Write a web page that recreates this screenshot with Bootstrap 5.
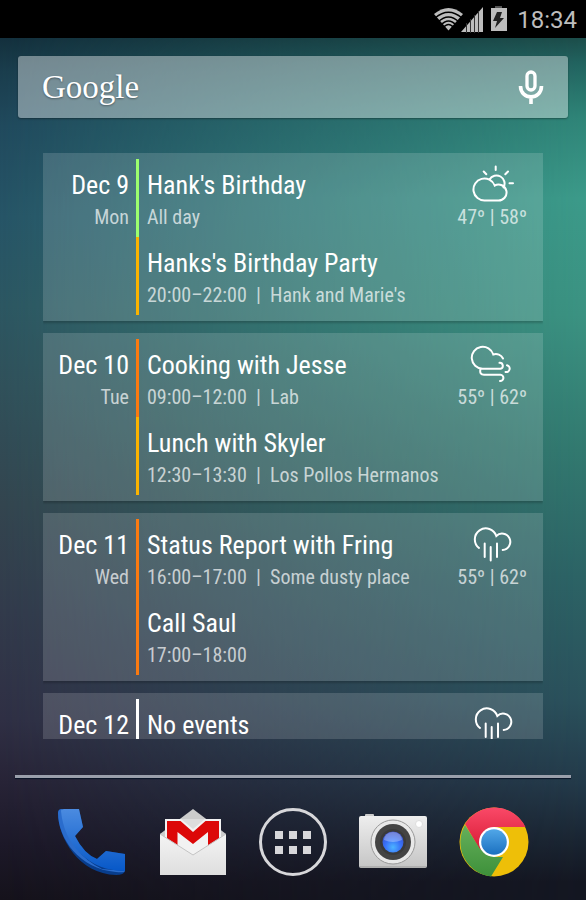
<!DOCTYPE html>
<html lang="en">
<head>
<meta charset="utf-8">
<meta name="viewport" content="width=device-width, initial-scale=1">
<title>Home screen</title>
<link href="https://cdn.jsdelivr.net/npm/bootstrap@5.3.0/dist/css/bootstrap.min.css" rel="stylesheet">
<style>
body { font-family: "Roboto Condensed", "Liberation Sans Narrow", Roboto, sans-serif; color: #fff; background: #15161f; }
.home { position: relative; z-index: 0; overflow: hidden; }
.wall, .wall::after { position: absolute; inset: 0; z-index: -1; }
.wall { background: linear-gradient(#1c4c49 4%, #226460 7%, #2f8578 13%, #3c9b8a 22%, #3b9382 35%, #327a70 50%, #2c6466 64%, #2a515c 78%, #233a4a 87%, #141722 98%); }
.wall::after { content: ""; background: linear-gradient(#132f3c 4%, #1a3d4d 8%, #20495d 14%, #265466 24%, #2c5661 34%, #30505a 43%, #33454f 56%, #323a4b 68%, #2f2f44 80%, #272336 87%, #1c1828 94%, #15121b 100%); -webkit-mask-image: linear-gradient(to right, #000, rgba(0,0,0,.48) 50%, transparent); mask-image: linear-gradient(to right, #000, rgba(0,0,0,.48) 50%, transparent); }
.status { height: 38px; background: #000; color: #bdbdbd; font: 24px/36px Roboto, sans-serif; padding: 2px 9px 0 0; gap: 10px; }
.search { margin: 18px 18px 0; height: 62px; padding: 0 20px 0 24px; border-radius: 3px; background: rgba(255,255,255,.4); box-shadow: 0 1px 2px rgba(0,0,0,.35); }
.logo { font: 33px/62px "Liberation Serif", serif; color: #fff; text-shadow: 0 1px 2px rgba(0,0,0,.4); }
.agenda { margin: 35px 43px 36px; min-height: 0; gap: 12px; }
.day { display: grid; flex: none; grid-template-columns: 86px 1fr auto; padding: 6px 16px 6px 0; background: rgba(255,255,255,.15); box-shadow: 0 2px 2px rgba(0,0,0,.2); }
.title { font-size: 26px; line-height: 28px; white-space: nowrap; }
.detail { font-size: 20px; line-height: 28px; margin-top: 4px; color: rgba(255,255,255,.7); white-space: nowrap; }
.date { padding-top: 12px; text-align: right; }
.slot { height: 78px; padding: 12px 0 0 8px; margin-left: 7px; border-left: 3px solid; }
.green { border-color: #9cff6e; } .amber { border-color: #fbb300; } .orange { border-color: #fb7a10; } .white { border-color: #fff; }
.weather { min-width: 69px; text-align: center; }
.weather .detail { margin-top: 0; }
.weather svg { display: block; width: 48px; height: 38px; margin: 6px auto 0; fill: none; stroke: #fff; stroke-width: 2; stroke-linecap: round; }
.rule { height: 3px; margin: 0 15px; background: #9a9fab; box-shadow: 0 1px 1px #081326; }
.dock { padding: 27px 42px 21px; }
.dock svg { width: 74px; height: 74px; display: block; }
</style>
<script src="https://cdn.jsdelivr.net/npm/bootstrap@5.3.0/dist/js/bootstrap.bundle.min.js"></script>
</head>
<body>
<svg class="d-none" aria-hidden="true">
  <symbol id="rain" viewBox="0 0 48 38"><path d="M11 23A11 11 0 1 1 28.300 11 8.200 8.200 0 1 1 34.700 25M16.700 18.500V32M22.700 22V35.500M29 18.500V32"/></symbol>
</svg>
<div class="home vh-100 d-flex flex-column">
  <div class="wall"></div>
  <header class="status d-flex justify-content-end align-items-center">
    <svg width="75" height="30" viewBox="0 0 75 30" fill="#bdbdbd" aria-label="Wi-Fi, signal, battery charging">
      <path d="M2 9Q16.500-3 31 9L16.500 25.500Z"/>
      <g fill="none" stroke="#000" stroke-width="1.300"><path d="M3 13Q16.500 1.500 30 13M6 17Q16.500 7 27 17M9 20Q16.500 12 24 20M11 23Q16.500 16 22 23"/></g>
      <path d="M29 27L51 2V27Z"/><path d="M34.500 18V28M38.500 14V28M42.500 10V28M46.500 6V28" stroke="#333" stroke-width="1"/>
      <path d="M63 1H70V4H63Z" fill="#555"/><path d="M59 3H75V26H59Z"/><path d="M65 7H70L68 13H72L63 23L65 16H61Z" fill="#222"/>
    </svg>
    <time>18:34</time>
  </header>
  <div class="search d-flex align-items-center justify-content-between">
    <span class="logo">Google</span>
    <button type="button" class="btn p-0 border-0" aria-label="Voice search">
      <svg class="d-block" width="34" height="40" viewBox="0 0 34 40" fill="none" stroke="#fff"><rect x="13" y="5" width="8" height="18" rx="4" stroke-width="3.300"/><path d="M6.500 19C6.500 33.500 27.500 33.500 27.500 19M17 29V37" stroke-width="3.600"/></svg>
    </button>
  </div>

  <main class="agenda d-flex flex-column flex-fill overflow-hidden">
    <section class="day">
      <div class="date"><div class="title">Dec 9</div><div class="detail">Mon</div></div>
      <div>
        <div class="slot green"><div class="title">Hank's Birthday</div><div class="detail">All day</div></div>
        <div class="slot amber"><div class="title">Hanks's Birthday Party</div><div class="detail">20:00–22:00 &nbsp;|&nbsp; Hank and Marie's</div></div>
      </div>
      <div class="weather">
        <svg viewBox="0 0 48 38"><path d="M17 35.500A11 11 0 1 1 26.700 20.500 8 8 0 1 1 30 35.500ZM21.500 14.500A8 8 0 1 1 35.500 22.500M27.700 1.500V5M15.700 6.500L18.300 9.300M40 6.500L37.300 9.300M41.500 18.300H45"/></svg>
        <div class="detail">47º | 58º</div>
      </div>
    </section>
    <section class="day">
      <div class="date"><div class="title">Dec 10</div><div class="detail">Tue</div></div>
      <div>
        <div class="slot orange"><div class="title">Cooking with Jesse</div><div class="detail">09:00–12:00 &nbsp;|&nbsp; Lab</div></div>
        <div class="slot amber"><div class="title">Lunch with Skyler</div><div class="detail">12:30–13:30 &nbsp;|&nbsp; Los Pollos Hermanos</div></div>
      </div>
      <div class="weather">
        <svg viewBox="0 0 48 38"><path d="M35 13.500A8 8 0 0 0 25.300 9.500A11 11 0 1 0 14.500 23.700H32.500A3 3 0 0 0 31.500 17.800M12.500 24C11.500 28 13 29.700 16 29.700H32.500A3 3 0 0 1 32 36M39 20.300A3.400 3.400 0 1 1 37.500 27"/></svg>
        <div class="detail">55º | 62º</div>
      </div>
    </section>
    <section class="day">
      <div class="date"><div class="title">Dec 11</div><div class="detail">Wed</div></div>
      <div>
        <div class="slot orange"><div class="title">Status Report with Fring</div><div class="detail">16:00–17:00 &nbsp;|&nbsp; Some dusty place</div></div>
        <div class="slot orange"><div class="title">Call Saul</div><div class="detail">17:00–18:00</div></div>
      </div>
      <div class="weather">
        <svg viewBox="0 0 48 38"><use href="#rain"/></svg>
        <div class="detail">55º | 62º</div>
      </div>
    </section>
    <section class="day">
      <div class="date"><div class="title">Dec 12</div></div>
      <div><div class="slot white"><div class="title">No events</div></div></div>
      <div class="weather"><svg viewBox="0 0 48 38"><use href="#rain"/></svg></div>
    </section>
  </main>

  <div class="rule"></div>
  <nav class="dock row row-cols-5 g-0">
    <div class="col d-flex justify-content-center"><button type="button" class="btn p-0 border-0" aria-label="Phone">
      <svg viewBox="0 0 74 74"><defs><linearGradient id="ph" x2="0" y2="1"><stop stop-color="#4b8be0"/><stop offset="1" stop-color="#0758c8"/></linearGradient></defs>
      <path d="M3 8Q3 4 7 4H24L28 22 20 31Q29 49 42 54L51 46 70 49V66Q69 70 61 70C24 69 3 33 3 8Z" fill="#083d8c"/>
      <path d="M3 8Q3 4 7 4L9 14Q16 49 47 64L70 66Q69 68 61 67C24 64 3 33 3 8Z" fill="#2a6ccc"/>
      <path d="M6 6Q6 4 9 4H24L28 22 20 31Q29 49 42 54L51 46 70 49V66C34 66 9 40 6 6Z" fill="url(#ph)"/></svg></button></div>
    <div class="col d-flex justify-content-center"><button type="button" class="btn p-0 border-0" aria-label="Gmail">
      <svg viewBox="0 0 74 74"><defs><linearGradient id="gm" x2="0" y2="1"><stop stop-color="#f4f4f4"/><stop offset="1" stop-color="#dedede"/></linearGradient></defs>
      <path d="M37 4L70 29V50H4V29Z" fill="#ccc"/><path d="M9 14H65V52H9Z" fill="#f2f2f2"/><path d="M25 14H49L37 24Z" fill="#ddd"/>
      <path d="M11 16H24.500L37 27 49.500 16H63V42H52V27L37 39 21.500 27V42H11Z" fill="#dc0808"/>
      <path d="M4 29L37 50 70 29V70H4Z" fill="url(#gm)"/><path d="M4 29L37 50 70 29" fill="none" stroke="#c4c4c4"/></svg></button></div>
    <div class="col d-flex justify-content-center"><button type="button" class="btn p-0 border-0" aria-label="All apps">
      <svg viewBox="0 0 74 74"><circle cx="37" cy="37" r="32.500" fill="none" stroke="#d7d7da" stroke-width="3"/><path d="M19 26h8v8h-8zM33 26h8v8h-8zM47 26h8v8h-8zM19 41h8v8h-8zM33 41h8v8h-8zM47 41h8v8h-8z" fill="#d7d7da"/></svg></button></div>
    <div class="col d-flex justify-content-center"><button type="button" class="btn p-0 border-0" aria-label="Camera">
      <svg viewBox="0 0 74 74"><defs><linearGradient id="cm" x2="0" y2="1"><stop stop-color="#eee"/><stop offset="1" stop-color="#c5c5c5"/></linearGradient><radialGradient id="ln" cy=".75" r=".75"><stop stop-color="#4cb4ff"/><stop offset=".5" stop-color="#3972f8"/><stop offset="1" stop-color="#3a4cc0"/></radialGradient></defs>
      <rect x="9" y="9" width="9" height="4" rx="1" fill="#ccc"/><rect x="3" y="11" width="68" height="52" rx="2" fill="url(#cm)"/><path d="M4 62H70" stroke="#999"/>
      <circle cx="37" cy="37" r="22" fill="#e8e8e8" stroke="#999"/><circle cx="37" cy="37" r="18" fill="#444"/><circle cx="37" cy="37" r="13" fill="#3a3a3a"/><circle cx="37" cy="37" r="10.500" fill="url(#ln)"/><path d="M28 35A9 8 0 0 1 46 35Q37 39 28 35Z" fill="#fff" opacity=".3"/><circle cx="63" cy="19" r="3.500" fill="#fff" stroke="#ddd"/></svg></button></div>
    <div class="col d-flex justify-content-center"><button type="button" class="btn p-0 border-0" aria-label="Chrome">
      <svg viewBox="0 0 74 74"><defs><linearGradient id="cr" x2="0" y2="1"><stop stop-color="#fa4968"/><stop offset="1" stop-color="#d81b35"/></linearGradient><linearGradient id="cg" x2="0" y2="1"><stop stop-color="#66b05b"/><stop offset="1" stop-color="#3d903a"/></linearGradient><linearGradient id="cb" x2="0" y2="1"><stop stop-color="#51a7e8"/><stop offset="1" stop-color="#1b70c0"/></linearGradient></defs>
      <circle cx="37" cy="37" r="34.500" fill="#eebf08"/><path d="M37 37L23 45 8 19A34.500 34.500 0 0 1 68.500 22H37Z" fill="url(#cr)"/><path d="M8 20L23 44 37 52H46L34 71.500A34.500 34.500 0 0 1 8 20Z" fill="url(#cg)"/>
      <circle cx="37" cy="37" r="15" fill="#fff"/><circle cx="37" cy="37" r="12.800" fill="url(#cb)"/></svg></button></div>
  </nav>
</div>
</body>
</html>
